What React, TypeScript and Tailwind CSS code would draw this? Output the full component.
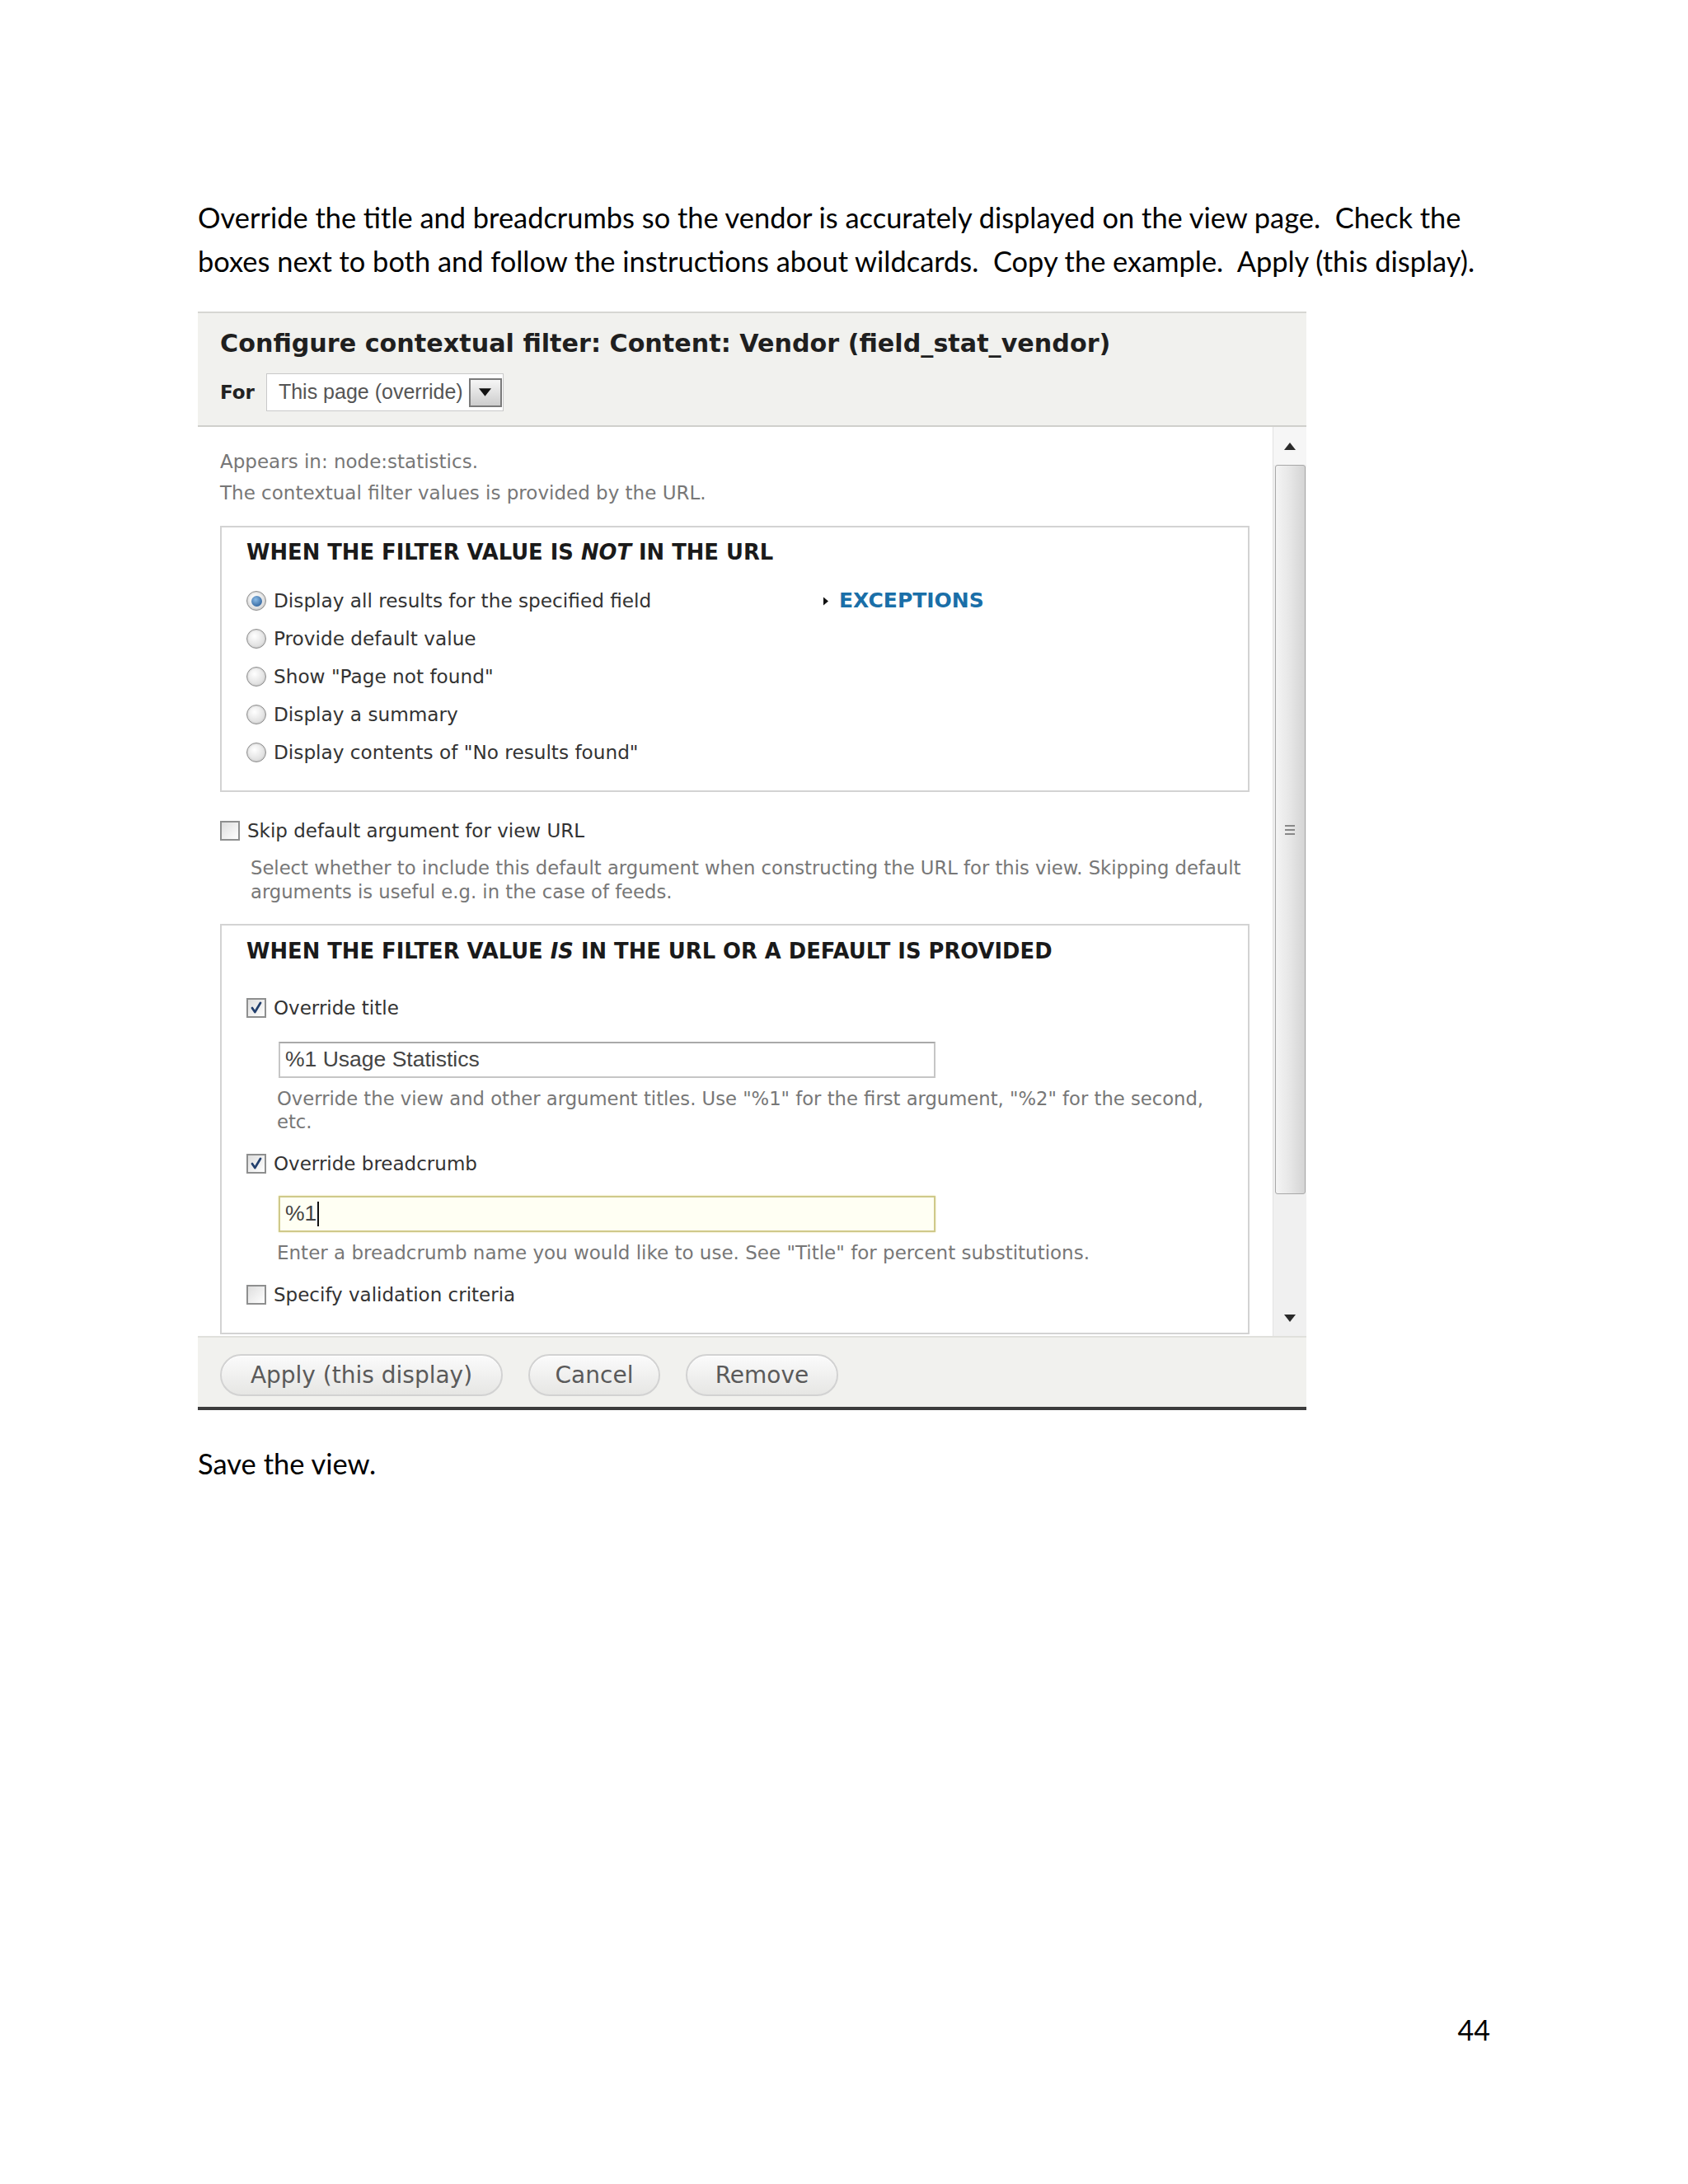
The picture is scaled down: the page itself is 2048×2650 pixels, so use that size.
import React from "react";

function Radio({ checked }: { checked?: boolean }) {
  return (
    <span className="w-[24px] h-[24px] rounded-full border border-[#8f8f8f] bg-[radial-gradient(circle_at_40%_35%,#ffffff,#d0d0d0)] flex items-center justify-center shrink-0 shadow-[inset_0_0_2px_#aaa]">
      {checked && (
        <span className="w-[13px] h-[13px] rounded-full bg-[radial-gradient(circle_at_40%_35%,#8bbbe6,#1b4f8c)]" />
      )}
    </span>
  );
}

function Check({ checked }: { checked?: boolean }) {
  return (
    <span className="w-[24px] h-[24px] border-2 border-[#8e8f8f] bg-linear-to-br from-[#dedede] to-[#ffffff] flex items-center justify-center shrink-0">
      {checked && (
        <svg viewBox="0 0 16 16" className="w-[18px] h-[18px]">
          <path d="M3.5 8 L6.5 12.5 L12.5 2.5" stroke="#23406e" strokeWidth="2.4" fill="none" strokeLinecap="round" strokeLinejoin="round" />
        </svg>
      )}
    </span>
  );
}

function RadioRow({ label, checked }: { label: string; checked?: boolean }) {
  return (
    <div className="h-[46px] flex items-center gap-[9px]">
      <Radio checked={checked} />
      <span className="text-[23.2px] text-[#333] font-['DejaVu_Sans',sans-serif] whitespace-nowrap">{label}</span>
    </div>
  );
}

function CheckRow({ label, checked }: { label: string; checked?: boolean }) {
  return (
    <div className="h-[40px] flex items-center gap-[9px]">
      <Check checked={checked} />
      <span className="text-[23px] text-[#333] font-['DejaVu_Sans',sans-serif] whitespace-nowrap">{label}</span>
    </div>
  );
}

function Btn({ label, w }: { label: string; w: string }) {
  return (
    <div
      className={
        "h-[51px] rounded-full border-2 border-[#d2d2d2] bg-linear-to-b from-[#fbfbfb] to-[#e6e6e4] flex items-center justify-center text-[28px] text-[#5a5a5a] font-['DejaVu_Sans',sans-serif] shadow-[0_1px_0_#fff_inset] " +
        w
      }
    >
      {label}
    </div>
  );
}

export default function App() {
  return (
    <div className="w-[2048px] h-[2650px] bg-white relative">
      <div className="pl-[240px] pt-[237px]">
        <p className="text-[34.4px] leading-[53px] text-black font-['Lato',sans-serif] whitespace-nowrap">
          Override the title and breadcrumbs so the vendor is accurately displayed on the view page.{"\u00a0 "}Check the
          <br />
          boxes next to both and follow the instructions about wildcards.{"\u00a0 "}Copy the example.{"\u00a0 "}Apply (this display).
        </p>

        {/* Dialog */}
        <div className="mt-[35px] w-[1345px] flex flex-col font-['DejaVu_Sans',sans-serif]">
          {/* Header */}
          <div className="bg-[#f1f1ee] border-t-2 border-b-2 border-t-[#d6d6d3] border-b-[#d0d0cc] pl-[27px] pt-[19px] pb-[17px]">
            <div className="text-[30.2px] leading-[36px] font-bold text-[#1f1f1f] whitespace-nowrap">
              Configure contextual filter: Content: Vendor (field_stat_vendor)
            </div>
            <div className="flex items-center mt-[18px] h-[46px]">
              <span className="text-[23px] font-bold text-[#222]">For</span>
              <div className="ml-[14px] h-[46px] w-[288px] border border-[#c9c9c9] bg-white flex items-center pl-[14px]">
                <span className="text-[25px] text-[#555] font-['Liberation_Sans',sans-serif] whitespace-nowrap">This page (override)</span>
                <div className="ml-auto mr-[1px] w-[40px] h-[35px] border-2 border-[#7a7a7a] bg-linear-to-b from-[#f6f6f6] to-[#cdcdcd] flex items-center justify-center">
                  <svg viewBox="0 0 14 9" className="w-[15px] h-[10px]">
                    <polygon points="0,0 14,0 7,9" fill="#111" />
                  </svg>
                </div>
              </div>
            </div>
          </div>

          {/* Body */}
          <div className="flex h-[1103px] bg-white">
            <div className="flex-1 pl-[27px] pt-[23px] overflow-hidden">
              <div className="text-[23px] leading-[38px] text-[#777]">
                <div>Appears in: node:statistics.</div>
                <div>The contextual filter values is provided by the URL.</div>
              </div>

              {/* Fieldset 1 */}
              <div className="mt-[21px] w-[1249px] border-2 border-[#d3d3d3] pl-[30px] pt-[14px] pb-[23px]">
                <div className="text-[25.8px] leading-[32px] font-bold text-[#1a1a1a] whitespace-nowrap">
                  WHEN THE FILTER VALUE IS <i>NOT</i> IN THE URL
                </div>
                <div className="mt-[20px] flex">
                  <div className="w-[700px] flex flex-col">
                    <RadioRow label="Display all results for the specified field" checked />
                    <RadioRow label="Provide default value" />
                    <RadioRow label={'Show "Page not found"'} />
                    <RadioRow label="Display a summary" />
                    <RadioRow label={'Display contents of "No results found"'} />
                  </div>
                  <div className="h-[46px] flex items-center gap-[13px]">
                    <svg viewBox="0 0 6 10" className="w-[6px] h-[11px]">
                      <polygon points="0,0 6,5 0,10" fill="#111" />
                    </svg>
                    <span className="text-[25px] font-bold text-[#1a6fa8]">EXCEPTIONS</span>
                  </div>
                </div>
              </div>

              {/* Skip default */}
              <div className="mt-[27px]">
                <CheckRow label="Skip default argument for view URL" />
              </div>
              <div className="mt-[11px] pl-[37px] text-[22.7px] leading-[29px] text-[#777]">
                <div className="whitespace-nowrap">
                  Select whether to include this default argument when constructing the URL for this view. Skipping default
                </div>
                <div>arguments is useful e.g. in the case of feeds.</div>
              </div>

              {/* Fieldset 2 */}
              <div className="mt-[24px] w-[1249px] border-2 border-[#d3d3d3] pl-[30px] pt-[15px] pb-[26px]">
                <div className="text-[25.8px] leading-[32px] font-bold text-[#1a1a1a] whitespace-nowrap">
                  WHEN THE FILTER VALUE <i>IS</i> IN THE URL OR A DEFAULT IS PROVIDED
                </div>
                <div className="mt-[33px]">
                  <CheckRow label="Override title" checked />
                </div>
                <div className="mt-[21px] ml-[39px] w-[797px] h-[44px] border-2 border-[#c6c6c6] border-t-[#a9a9a9] bg-white flex items-center pl-[6px]">
                  <span className="text-[26.5px] text-[#444] font-['Liberation_Sans',sans-serif] whitespace-nowrap">%1 Usage Statistics</span>
                </div>
                <div className="mt-[11px] ml-[37px] text-[22.7px] leading-[28px] text-[#777]">
                  <div className="whitespace-nowrap">
                    Override the view and other argument titles. Use "%1" for the first argument, "%2" for the second,
                  </div>
                  <div>etc.</div>
                </div>
                <div className="mt-[17px]">
                  <CheckRow label="Override breadcrumb" checked />
                </div>
                <div className="mt-[19px] ml-[39px] w-[797px] h-[44px] border-2 border-[#cfc98a] bg-[#fffff3] flex items-center pl-[6px] shadow-[0_0_2px_#e6e0a0]">
                  <span className="text-[26.5px] text-[#444] font-['Liberation_Sans',sans-serif] whitespace-nowrap">%1</span>
                  <span className="ml-[1px] w-[2px] h-[30px] bg-[#111]" />
                </div>
                <div className="mt-[11px] ml-[37px] text-[23px] leading-[28px] text-[#777] whitespace-nowrap">
                  Enter a breadcrumb name you would like to use. See "Title" for percent substitutions.
                </div>
                <div className="mt-[17px]">
                  <CheckRow label="Specify validation criteria" />
                </div>
              </div>
            </div>

            {/* Scrollbar */}
            <div className="w-[41px] bg-[#f0f0f0] border-l border-[#e2e2e2] flex flex-col items-center">
              <div className="h-[46px] w-full flex items-center justify-center bg-[#f6f6f6]">
                <svg viewBox="0 0 14 9" className="w-[14px] h-[9px]">
                  <polygon points="7,0 14,9 0,9" fill="#2a2a2a" />
                </svg>
              </div>
              <div className="w-[37px] h-[885px] rounded-[3px] border border-[#a8a8a8] bg-linear-to-r from-[#f4f4f4] via-[#e6e6e6] to-[#d4d4d4] flex flex-col items-center justify-center gap-[3px]">
                <span className="w-[12px] h-[2px] bg-[#888]" />
                <span className="w-[12px] h-[2px] bg-[#888]" />
                <span className="w-[12px] h-[2px] bg-[#888]" />
              </div>
              <div className="flex-1" />
              <div className="h-[44px] w-full flex items-center justify-center">
                <svg viewBox="0 0 14 9" className="w-[14px] h-[9px]">
                  <polygon points="0,0 14,0 7,9" fill="#2a2a2a" />
                </svg>
              </div>
            </div>
          </div>

          {/* Footer */}
          <div className="h-[90px] bg-[#f1f1ee] border-t-2 border-[#e0e0dc] border-b-4 border-b-[#3c3c3c] flex items-start pl-[27px] pt-[20px] gap-[31px]">
            <Btn label="Apply (this display)" w="w-[343px]" />
            <Btn label="Cancel" w="w-[160px]" />
            <Btn label="Remove" w="w-[185px]" />
          </div>
        </div>

        <p className="mt-[38px] text-[34.5px] leading-[53px] text-black font-['Lato',sans-serif]">Save the view.</p>

        <div className="mt-[634px] w-[1568px] text-right text-[34px] leading-[53px] text-black font-['Lato',sans-serif]">44</div>
      </div>
    </div>
  );
}
